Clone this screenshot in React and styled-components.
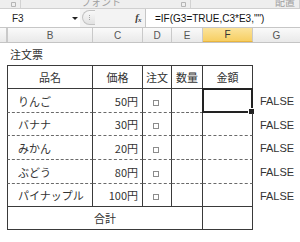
import React from 'react';
import styled, { createGlobalStyle } from 'styled-components';

const GlobalStyle = createGlobalStyle`
  html, body {
    margin: 0;
    padding: 0;
    background: #fff;
  }
  body {
    font-family: "Noto Sans CJK JP", "Liberation Sans", sans-serif;
  }
`;

const COLS = '7px 86px 50px 29px 31px 50px 48px';
const LINE = '#3a3a3a';

const Window = styled.div`
  width: 300px;
  height: 242px;
  overflow: hidden;
  background: #fff;
  display: flex;
  flex-direction: column;
`;

// ribbon remnants (clipped group labels)
const RibbonStrip = styled.div`
  height: 8px;
  flex: none;
  display: flex;
  overflow: hidden;
  background: #eeeeee;
`;

const RibbonGroup = styled.div`
  width: ${p => p.$width}px;
  flex: none;
  box-sizing: border-box;
  display: flex;
  align-items: flex-end;
  justify-content: ${p => p.$justify || 'center'};
  padding-right: 4px;
  border-right: 1px solid #d2d2d2;
  gap: 6px;
`;

const GroupLabel = styled.span`
  font-size: 10px;
  line-height: 13px;
  color: #a0a0a0;
  font-family: "Noto Sans CJK JP", sans-serif;
`;

const Launcher = styled.svg`
  width: 5px;
  height: 5px;
  margin-bottom: 1px;
  flex: none;
`;

const FormulaBar = styled.div`
  height: 20px;
  flex: none;
  display: flex;
  box-sizing: border-box;
  border-top: 1px solid #cfcfcf;
  border-bottom: 1px solid #c6c6c6;
  background: #f3f3f3;
`;

const NameBox = styled.div`
  width: 80px;
  flex: none;
  display: flex;
  align-items: center;
  justify-content: space-between;
  box-sizing: border-box;
  padding: 0 2px 0 12px;
  background: #fff;
  font-family: "Liberation Sans", sans-serif;
  font-size: 10px;
  color: #222;
`;

const DropArrow = styled.span`
  width: 0;
  height: 0;
  border-left: 3px solid transparent;
  border-right: 3px solid transparent;
  border-top: 3px solid #222;
  margin-top: 1px;
`;

const Splitter = styled.div`
  width: 13px;
  height: 15px;
  margin: 1px 0 0 2px;
  box-sizing: border-box;
  border: 1px solid #c2c2c2;
  border-right: none;
  border-radius: 8px 0 0 8px;
  background: linear-gradient(#f8f8f8, #e2e2e2);
  display: flex;
  align-items: center;
  justify-content: center;
  &::after {
    content: '';
    width: 1px;
    height: 5px;
    background: repeating-linear-gradient(#a8a8a8 0 1px, transparent 1px 2px);
  }
`;

const FxArea = styled.div`
  flex: 1;
  max-width: 46px;
  display: flex;
  align-items: center;
  justify-content: flex-end;
  padding-right: 4px;
`;

const Fx = styled.span`
  font-family: "Liberation Serif", serif;
  font-style: italic;
  font-weight: bold;
  font-size: 10px;
  color: #3a3a3a;
  letter-spacing: -0.5px;
  & sub {
    font-size: 7px;
    vertical-align: -1px;
  }
`;

const FormulaInput = styled.div`
  flex: 1;
  display: flex;
  align-items: center;
  padding-left: 9px;
  background: #fff;
  border-left: 1px solid #c6c6c6;
  font-family: "Liberation Sans", sans-serif;
  font-size: 10px;
  color: #111;
  white-space: nowrap;
`;

const ColHeaderRow = styled.div`
  height: 15px;
  flex: none;
  display: grid;
  grid-template-columns: ${COLS};
  box-sizing: border-box;
  border-bottom: 1px solid #c4c4c4;
  background: linear-gradient(#fafafa, #e9e9e9);
`;

const ColHeader = styled.div`
  box-sizing: border-box;
  display: flex;
  align-items: center;
  justify-content: center;
  border-left: ${p => (p.$first ? '1px solid #c9c9c9' : 'none')};
  border-right: 1px solid #c9c9c9;
  font-family: "Liberation Sans", sans-serif;
  font-size: 10px;
  color: ${p => (p.$active ? '#333' : '#555')};
  background: ${p => (p.$active ? 'linear-gradient(#fbe39c, #f7cf63)' : 'transparent')};
  border-bottom: ${p => (p.$active ? '1px solid #e9b53e' : 'none')};
`;

const Sheet = styled.div`
  display: grid;
  grid-template-columns: ${COLS};
  grid-template-rows: 22px 24px 24px 23px 24px 24px 23px 23px;
`;

const justify = { left: 'flex-start', center: 'center', right: 'flex-end' };

const Cell = styled.div`
  box-sizing: border-box;
  position: relative;
  display: flex;
  align-items: center;
  justify-content: ${p => justify[p.$align || 'left']};
  padding: ${p => (p.$align === 'right' ? '0 4px 0 0' : p.$align === 'left' ? `0 0 0 ${p.$indent ?? 10}px` : '0')};
  grid-column: ${p => (p.$span ? `span ${p.$span}` : 'auto')};
  border-left: ${p => (p.$left ? `1px solid ${LINE}` : 'none')};
  border-right: ${p => (p.$framed ? `1px solid ${LINE}` : 'none')};
  border-top: ${p => (p.$top ? `1px solid ${LINE}` : 'none')};
  border-bottom: ${p => (p.$bottom ? `1px ${p.$bottom} ${p.$bottom === 'dashed' ? '#6a6a6a' : LINE}` : 'none')};
  font-size: 11px;
  color: #333;
  white-space: nowrap;
`;

const BoolText = styled.span`
  font-family: "Liberation Sans", sans-serif;
  font-size: 11px;
  color: #333;
`;

const CheckMark = styled.span`
  width: 6px;
  height: 6px;
  box-sizing: border-box;
  border: 1px solid #8c8c8c;
  margin-top: 4px;
`;

const Selection = styled.div`
  position: absolute;
  top: -1px;
  left: -1px;
  right: -1px;
  bottom: -1px;
  border: 2px solid #222;
`;

const FillHandle = styled.div`
  position: absolute;
  right: -4px;
  bottom: -4px;
  width: 5px;
  height: 5px;
  background: #222;
  border: 1px solid #fff;
`;

const items = [
  { name: 'りんご', price: '50円' },
  { name: 'バナナ', price: '30円' },
  { name: 'みかん', price: '20円' },
  { name: 'ぶどう', price: '80円' },
  { name: 'パイナップル', price: '100円' },
];

const headers = ['品名', '価格', '注文', '数量', '金額'];

export default function App() {
  return (
    <Window>
      <GlobalStyle />
      <RibbonStrip>
        <RibbonGroup $width={21} $justify="flex-end">
          <Launcher viewBox="0 0 5 5">
            <path d="M0.5 0.5h4v4h-4z" fill="none" stroke="#b5b5b5" strokeWidth="1" />
          </Launcher>
        </RibbonGroup>
        <RibbonGroup $width={170} $justify="space-between">
          <span />
          <GroupLabel>フォント</GroupLabel>
          <Launcher viewBox="0 0 5 5">
            <path d="M0.5 0.5h4v4h-4z" fill="none" stroke="#b5b5b5" strokeWidth="1" />
          </Launcher>
        </RibbonGroup>
        <RibbonGroup $width={109} $justify="flex-end">
          <GroupLabel>配置</GroupLabel>
        </RibbonGroup>
      </RibbonStrip>

      <FormulaBar>
        <NameBox>
          F3
          <DropArrow />
        </NameBox>
        <Splitter />
        <FxArea>
          <Fx>f<sub>x</sub></Fx>
        </FxArea>
        <FormulaInput>=IF(G3=TRUE,C3*E3,"")</FormulaInput>
      </FormulaBar>

      <ColHeaderRow>
        <ColHeader />
        <ColHeader $first>B</ColHeader>
        <ColHeader>C</ColHeader>
        <ColHeader>D</ColHeader>
        <ColHeader>E</ColHeader>
        <ColHeader $active>F</ColHeader>
        <ColHeader>G</ColHeader>
      </ColHeaderRow>

      <Sheet>
        <Cell />
        <Cell $span={6} $indent={3} $align="left">注文票</Cell>

        <Cell />
        {headers.map((h, i) => (
          <Cell key={h} $align="center" $left={i === 0} $framed $top $bottom="solid">
            {h}
          </Cell>
        ))}
        <Cell />

        {items.map((item, i) => {
          const edge = i === items.length - 1 ? 'solid' : 'dashed';
          return (
            <React.Fragment key={item.name}>
              <Cell />
              <Cell $align="left" $left $framed $bottom={edge}>{item.name}</Cell>
              <Cell $align="right" $framed $bottom={edge}>{item.price}</Cell>
              <Cell $align="left" $framed $bottom={edge}>
                <CheckMark />
              </Cell>
              <Cell $framed $bottom={edge} />
              <Cell $framed $bottom={edge}>
                {i === 0 && (
                  <Selection>
                    <FillHandle />
                  </Selection>
                )}
              </Cell>
              <Cell $align="center">
                <BoolText>FALSE</BoolText>
              </Cell>
            </React.Fragment>
          );
        })}

        <Cell />
        <Cell $span={4} $align="center" $left $framed $bottom="solid">合計</Cell>
        <Cell $framed $bottom="solid" />
        <Cell />
      </Sheet>
    </Window>
  );
}
